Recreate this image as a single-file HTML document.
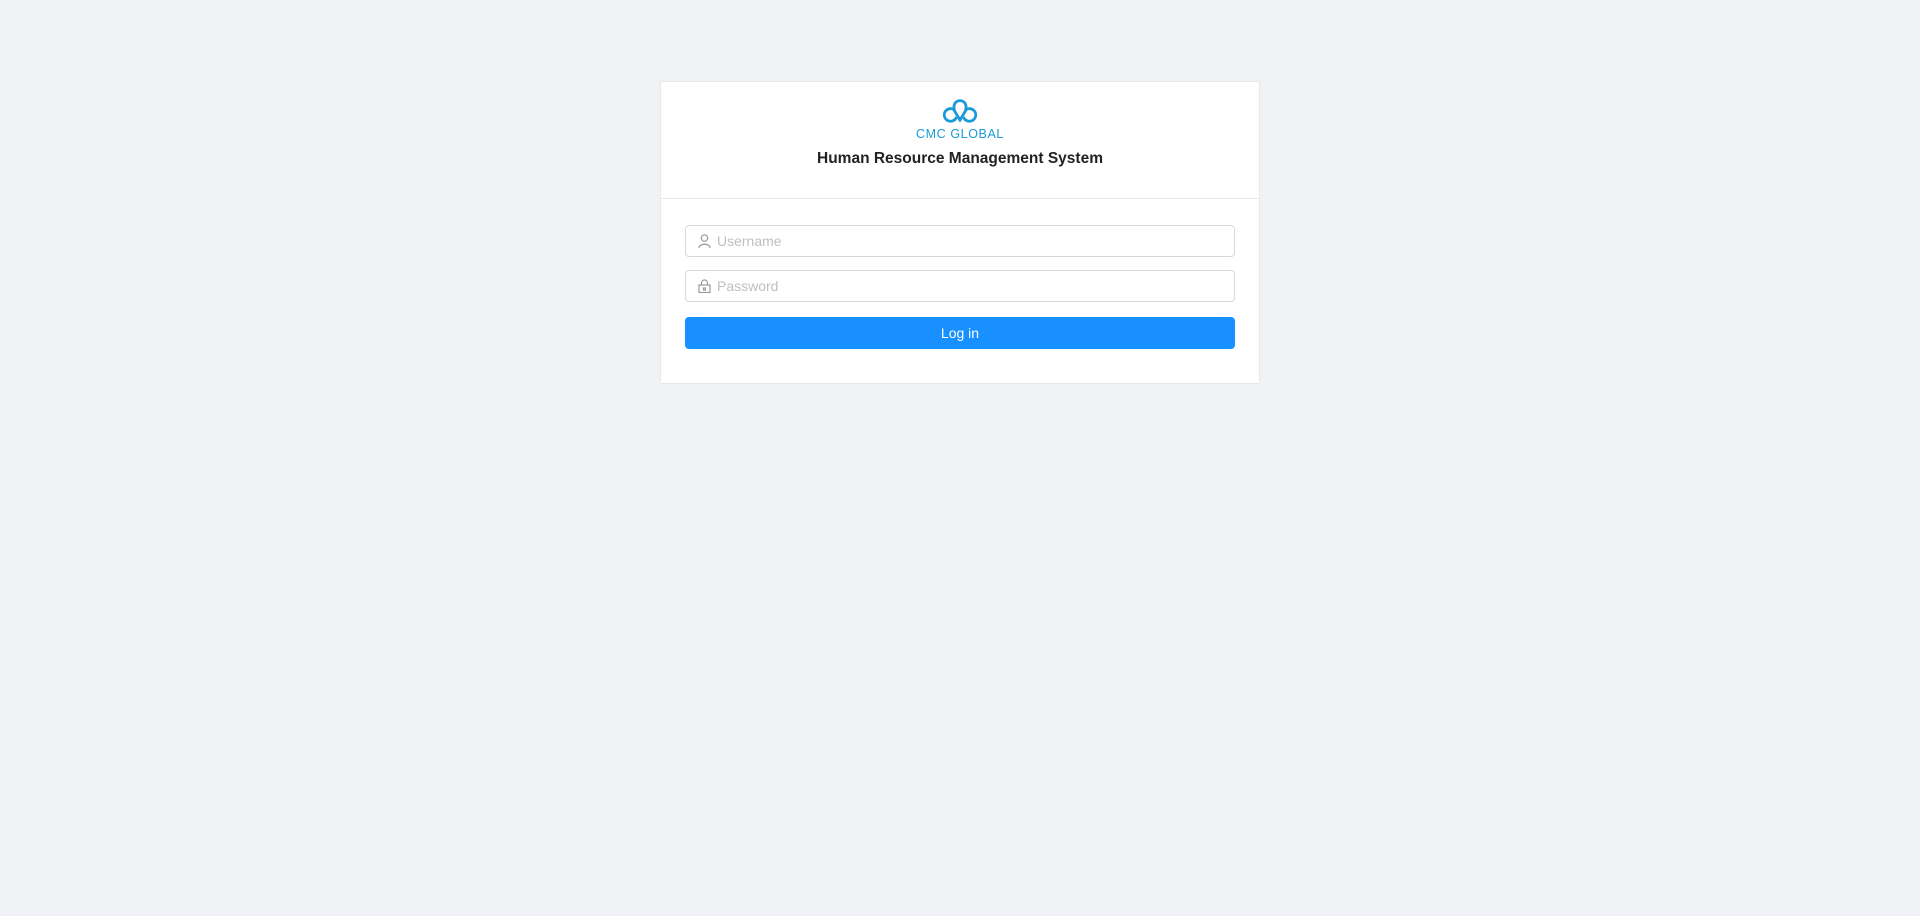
<!DOCTYPE html>
<html><head><meta charset="utf-8"><style>
body{margin:0;background:#f0f2f5;font-family:"Liberation Sans",sans-serif;width:1920px;height:916px;overflow:hidden}
.card{position:absolute;left:660px;top:81px;width:598px;height:301px;background:#fff;border:1px solid #e8e8e8;border-radius:2px}
.head{height:116px;border-bottom:1px solid #e8e8e8;text-align:center;position:relative}
.icon{position:absolute;left:282px;top:16px}
.lt{position:absolute;left:0;right:0;top:45px;color:#1a9ad6;font-size:12.5px;letter-spacing:0.6px;text-align:center}
.title{position:absolute;left:0;right:0;top:68px;font-weight:bold;font-size:15.5px;color:#222}
.inp{position:absolute;left:24px;width:548px;height:30px;border:1px solid #d9d9d9;border-radius:4px;color:#bfbfbf;font-size:14px;line-height:30px}
.inp svg{position:absolute;left:12px;top:8px}
.inp span{position:absolute;left:31px}
.btn{position:absolute;left:24px;top:235px;width:550px;height:32px;background:#1890ff;border-radius:4px;color:#fff;font-size:14px;text-align:center;line-height:32px}
</style></head><body>
<div class="card">
<div class="head">
<svg class="icon" width="34" height="26" viewBox="0 0 34 26"><g fill="none" stroke="#1a9ad6" stroke-width="2.8"><path d="M12 12.5 A6.3 6.3 0 1 0 13.5 19"/><path d="M22 12.5 A6.3 6.3 0 1 1 20.5 19"/><path d="M11.5 11 A6 6 0 1 1 22.5 11"/><path d="M11 12 L17 22 L23 12"/></g></svg>
<div class="lt">CMC GLOBAL</div>
<div class="title">Human Resource Management System</div>
</div>
<div class="inp" style="top:143px"><svg width="13" height="14" viewBox="0 0 13 14"><g fill="none" stroke="#999" stroke-width="1.2"><circle cx="6.5" cy="4" r="3.2"/><path d="M1 14 C1 9 12 9 12 14"/></g></svg><span>Username</span></div>
<div class="inp" style="top:188px"><svg width="13" height="14" viewBox="0 0 13 14"><g fill="none" stroke="#999" stroke-width="1.2"><rect x="1" y="6" width="11" height="7.5"/><path d="M3.5 6 V4 A3 3 0 0 1 9.5 4 V6"/><rect x="5.5" y="9" width="2" height="2"/></g></svg><span>Password</span></div>
<div class="btn">Log in</div>
</div>
</body></html>
